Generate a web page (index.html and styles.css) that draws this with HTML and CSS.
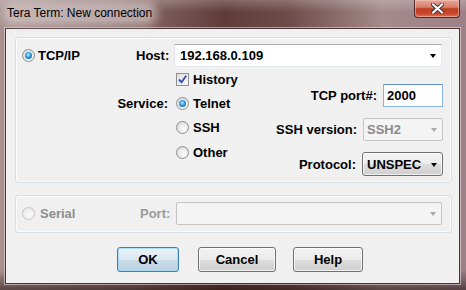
FILE: index.html
```html
<!DOCTYPE html>
<html lang="en">
  <head>
    <meta charset="UTF-8" />
    <title>Tera Term: New connection</title>
    <link rel="stylesheet" href="styles.css">
  </head>
  <body>
    <div class="window">
      <div class="titlebar">
        <span class="title">Tera Term: New connection</span>
        <div class="close">
          <svg width="13" height="11" viewBox="0 0 13 11">
            <path d="M2 1.5 L11 9.5 M11 1.5 L2 9.5" stroke="#3b3b3b" stroke-width="4" stroke-linecap="square" fill="none"/>
            <path d="M2 1.5 L11 9.5 M11 1.5 L2 9.5" stroke="#fff" stroke-width="2" stroke-linecap="square" fill="none"/>
          </svg>
        </div>
      </div>

      <div class="client">
        <!-- TCP/IP group -->
        <section class="group tcp-group">
          <div class="host-row">
            <div class="lead"><span class="radio checked"></span><span>TCP/IP</span></div>
            <span class="host-label">Host:</span>
            <div class="combo host-combo">192.168.0.109<span class="arrow"></span></div>
          </div>

          <div class="opts">
            <div class="service">
              <span></span>
              <div class="opt"><span class="check"><svg width="11" height="11" viewBox="0 0 11 11"><path d="M2 5.5 L4.5 8.2 L9.2 1.8" stroke="#3450b0" stroke-width="1.9" fill="none"/></svg></span>History</div>
              <span class="service-label">Service:</span>
              <div class="opt"><span class="radio checked"></span>Telnet</div>
              <span></span>
              <div class="opt tall"><span class="radio"></span>SSH</div>
              <span></span>
              <div class="opt"><span class="radio"></span>Other</div>
            </div>

            <div class="settings">
              <div class="setting">
                <span>TCP port#:</span>
                <div class="edit port">2000</div>
              </div>
              <div class="setting">
                <span>SSH version:</span>
                <div class="combo disabled ssh">SSH2<span class="arrow"></span></div>
              </div>
              <div class="setting">
                <span>Protocol:</span>
                <div class="dropdown proto">UNSPEC<span class="arrow"></span></div>
              </div>
            </div>
          </div>
        </section>

        <!-- Serial group -->
        <section class="group serial-group">
          <div class="serial-row">
            <div class="lead serial"><span class="radio off"></span><span>Serial</span></div>
            <span class="port-label">Port:</span>
            <div class="combo disabled port-combo"><span class="arrow"></span></div>
          </div>
        </section>

        <div class="buttons">
          <button class="btn default ok">OK</button>
          <button class="btn cancel">Cancel</button>
          <button class="btn help">Help</button>
        </div>
      </div>
    </div>
  </body>
</html>
```

FILE: styles.css
```css
html,
body {
  margin: 0;
  padding: 0;
  width: 466px;
  height: 290px;
  overflow: hidden;
}

.window {
  width: 466px;
  height: 290px;
  box-sizing: border-box;
  padding: 0 6px 6px 5px;
  background:
    linear-gradient(to bottom, rgba(255, 255, 255, 0.22) 0, rgba(255, 255, 255, 0) 12px),
    linear-gradient(to bottom, rgba(0, 0, 0, 0) 270px, rgba(30, 10, 10, 0.55) 290px),
    linear-gradient(to right, #a99191 0%, #8f7271 25%, #5f3c3a 48%, #6e4c4a 62%, #a48a8b 82%, #9c8188 100%);
  font-family: "Liberation Sans", Arial, sans-serif;
}

.titlebar {
  height: 28px;
  display: flex;
  align-items: flex-start;
  justify-content: space-between;
  padding-left: 2px;
}

.title {
  margin-top: 6px;
  font-size: 12px;
  line-height: 15px;
  color: #000;
  background: rgba(222, 214, 214, 0.55);
  box-shadow: 0 0 8px 5px rgba(222, 214, 214, 0.55);
  border-radius: 6px;
}

.close {
  width: 46px;
  height: 18px;
  box-sizing: border-box;
  margin-right: 0;
  border: 1px solid #4e2a28;
  border-top: none;
  border-radius: 0 0 4px 4px;
  background: linear-gradient(to bottom, #e7a597 0%, #d8806c 42%, #c13d22 52%, #c7452c 78%, #dc7356 100%);
  box-shadow: inset 0 0 0 1px rgba(255, 220, 210, 0.45);
  display: flex;
  align-items: center;
  justify-content: center;
}

.client {
  width: 455px;
  height: 256px;
  box-sizing: border-box;
  border: 1px solid #4a3434;
  box-shadow: 0 0 0 1px rgba(240, 225, 225, 0.55);
  background: #f0f0f0;
  padding: 8px 0 0 9px;
  font-size: 13px;
  font-weight: bold;
  color: #000;
}

.group {
  width: 437px;
  box-sizing: border-box;
  border: 1px solid #d5dfe5;
  border-radius: 3px;
  box-shadow: inset 0 0 0 1px #fbfbfb;
}

.tcp-group {
  height: 146px;
}

.serial-group {
  height: 38px;
  margin-top: 12px;
}

/* radios & checkbox */
.radio {
  position: relative;
  width: 13px;
  height: 13px;
  box-sizing: border-box;
  border-radius: 50%;
  border: 1px solid #8e8f8f;
  background: radial-gradient(circle at 60% 65%, #fdfdfd 0, #ececec 45%, #cfcfcf 100%);
  flex: none;
}

.radio.checked::after {
  content: "";
  position: absolute;
  left: 2px;
  top: 2px;
  width: 7px;
  height: 7px;
  border-radius: 50%;
  background: radial-gradient(circle at 45% 40%, #b9ecff 0, #3ea3e6 40%, #14609e 80%, #0e4c80 100%);
}

.radio.off {
  border-color: #c4c4c4;
  background: radial-gradient(circle at 60% 65%, #fbfbfb 0, #efefef 50%, #e0e0e0 100%);
}

.check {
  width: 13px;
  height: 13px;
  box-sizing: border-box;
  border: 1px solid #8e8f8f;
  background: linear-gradient(135deg, #dedede, #fbfbfb);
  display: flex;
  align-items: center;
  justify-content: center;
  flex: none;
}

/* host row */
.host-row,
.serial-row {
  display: flex;
  align-items: center;
  height: 23px;
  margin-top: 6px;
}

.lead {
  width: 120px;
  box-sizing: border-box;
  padding-left: 6px;
  display: flex;
  align-items: center;
  gap: 3px;
}

.host-label {
  width: 34px;
  margin-right: 4px;
}

.combo,
.edit,
.dropdown {
  position: relative;
  box-sizing: border-box;
  height: 23px;
  display: flex;
  align-items: center;
}

.combo {
  background: #fff;
  border: 1px solid #abadb3;
  border-color: #abadb3 #e3e9ef #e3e9ef #e2e3ea;
  padding-left: 5px;
}

.host-combo {
  width: 268px;
}

.arrow {
  position: absolute;
  right: 5px;
  top: 9px;
  width: 0;
  height: 0;
  border-left: 3.5px solid transparent;
  border-right: 3.5px solid transparent;
  border-top: 4px solid #000;
}

/* options */
.opts {
  display: flex;
  justify-content: space-between;
  padding-right: 8px;
}

.service {
  display: grid;
  grid-template-columns: 152px auto;
  grid-template-rows: 24px 24px 25px 24px;
  column-gap: 8px;
  align-items: center;
}

.service-label {
  text-align: right;
}

.opt {
  display: flex;
  align-items: center;
  gap: 4px;
}

.settings {
  margin-top: 17px;
  display: flex;
  flex-direction: column;
  align-items: flex-end;
  gap: 11px;
}

.setting {
  display: flex;
  align-items: center;
  gap: 6px;
}

.edit {
  width: 60px;
  background: #fff;
  border: 1px solid #8cb3dd;
  border-top-color: #5a8fc6;
  padding-left: 3px;
}

.combo.disabled {
  background: #f4f4f4;
  border: 1px solid #c5c5c5;
  border-radius: 2px;
  color: #8a8a8a;
}

.combo.disabled .arrow {
  border-top-color: #a9a9a9;
}

.ssh {
  width: 80px;
  padding-left: 3px;
}

.dropdown {
  width: 81px;
  height: 24px;
  padding-left: 4px;
  border: 1px solid #707070;
  border-radius: 3px;
  background: linear-gradient(to bottom, #f2f2f2 0%, #ebebeb 50%, #dddddd 51%, #cfcfcf 100%);
  box-shadow: inset 0 0 0 1px rgba(255, 255, 255, 0.7);
}

.dropdown .arrow {
  right: 5px;
  top: 10px;
}

/* serial */
.serial {
  width: 124px;
  gap: 5px;
  color: #8d8d8d;
}

.port-label {
  width: 30px;
  margin-right: 6px;
  color: #9a9a9a;
}

.port-combo {
  width: 266px;
}

/* buttons */
.buttons {
  display: flex;
  margin-top: 14px;
  padding-left: 102px;
}

.btn {
  height: 25px;
  box-sizing: border-box;
  border: 1px solid #707070;
  border-radius: 3px;
  background: linear-gradient(to bottom, #f2f2f2 0%, #ebebeb 50%, #dddddd 51%, #cfcfcf 100%);
  box-shadow: inset 0 0 0 1px rgba(255, 255, 255, 0.7);
  font-family: "Liberation Sans", Arial, sans-serif;
  font-size: 13px;
  font-weight: bold;
  color: #000;
  padding: 0;
  cursor: pointer;
}

.btn.default {
  border-color: #3c7fb1;
  background: linear-gradient(to bottom, #e9f3f9 0%, #dbe8f1 50%, #c9dbe7 51%, #bcd2e2 100%);
  box-shadow: inset 0 0 0 1px rgba(160, 215, 245, 0.8);
}

.ok {
  width: 62px;
}

.cancel {
  width: 78px;
  margin-left: 19px;
}

.help {
  width: 70px;
  margin-left: 17px;
}
```
